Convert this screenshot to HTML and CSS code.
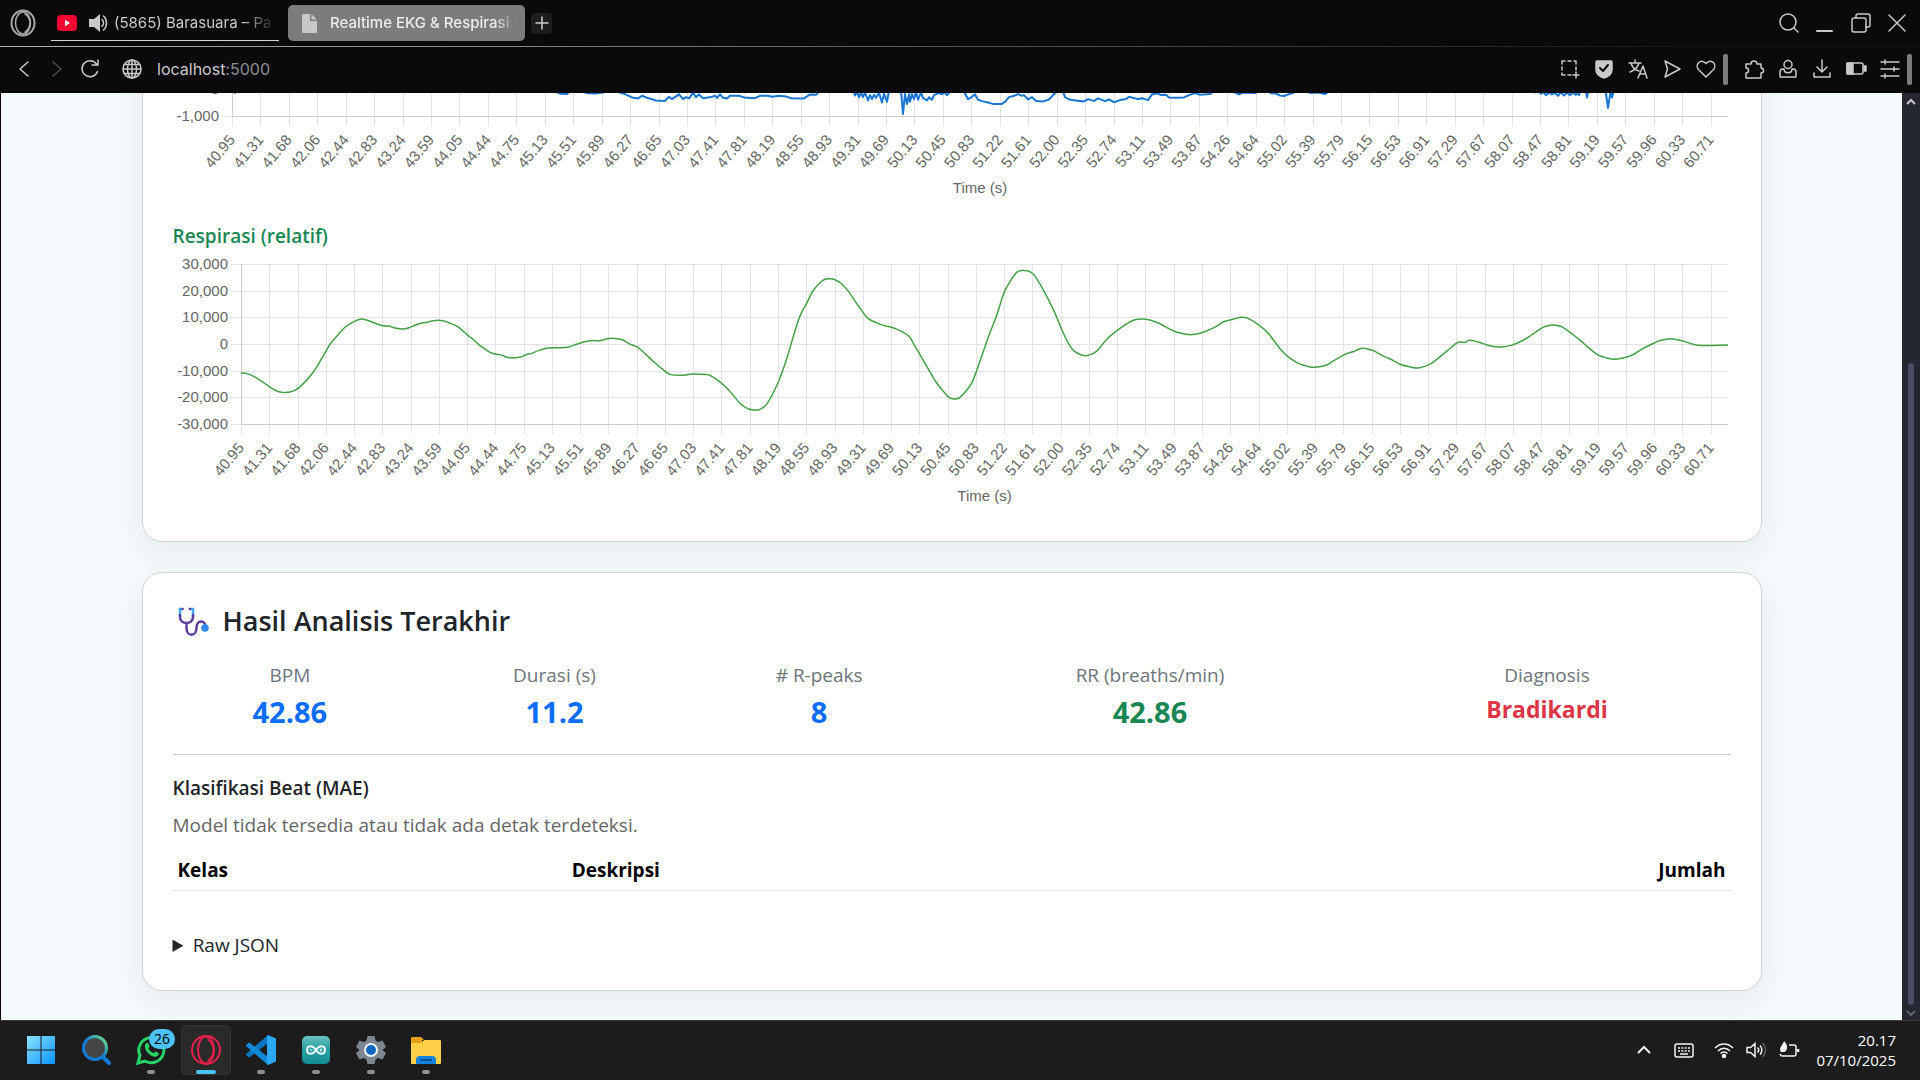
FILE: index.html
```html
<!DOCTYPE html>
<html lang="id">
<head>
<meta charset="utf-8">
<title>Realtime EKG &amp; Respirasi</title>
<link rel="stylesheet" href="styles.css">
</head>
<body>
<header class="browser">
  <div class="tabbar">
    <button class="opera-menu" aria-label="Menu">
      <svg width="26" height="30" viewBox="0 0 26 30" fill="none" stroke="#a9a9a9"><ellipse cx="13" cy="15" rx="11.500" ry="12.500" stroke-width="2"/><ellipse cx="13" cy="15" rx="7.500" ry="11" stroke-width="1.500"/><path d="M15 6c4 3 5 5 5 9s-1 6-5 9" stroke-width="1.500"/></svg>
    </button>
    <button class="tab tab-media">
      <svg width="20" height="16" viewBox="0 0 20 16"><rect width="20" height="16" rx="4" fill="#ff0033"/><path d="M8 4.800v6.400L13 8z" fill="#fff"/></svg>
      <svg class="speaker" width="19" height="18" viewBox="0 0 19 18"><path d="M0 5h5l6-5v18l-6-5H0z" fill="#c9c9c9"/><path d="M13 5.500c2 2 2 5 0 7M14.500 2c4 3.500 4 10.500 0 14" fill="none" stroke="#c9c9c9" stroke-width="1.500"/></svg>
      <span class="tab-title">(5865) Barasuara – Pa</span>
    </button>
    <button class="tab tab-active">
      <svg width="15" height="19" viewBox="0 0 15 19" fill="#c8c8c8"><path d="M1 0h7v7h7v11a1 1 0 0 1-1 1H1a1 1 0 0 1-1-1V1a1 1 0 0 1 1-1zM9.500 0 15 5.500H9.500z"/></svg>
      <span class="tab-title">Realtime EKG &amp; Respirasi V</span>
    </button>
    <button class="tab-new" aria-label="Tab baru"><svg width="12" height="12" viewBox="0 0 12 12" stroke="#ccc" stroke-width="1.500"><path d="M6 0v12M0 6h12"/></svg></button>
    <div class="window-controls">
      <button aria-label="Cari"><svg width="20" height="20" viewBox="0 0 20 20"><circle cx="9" cy="9" r="8"/><path d="m15 15 4 4"/></svg></button>
      <button aria-label="Perkecil"><svg width="20" height="20" viewBox="0 0 20 20"><path d="M2 18h15" stroke-width="2"/></svg></button>
      <button aria-label="Pulihkan"><svg width="20" height="20" viewBox="0 0 20 20"><rect x="1" y="5" width="14" height="14" rx="2"/><path d="M5 5V3a2 2 0 0 1 2-2h10a2 2 0 0 1 2 2v9a2 2 0 0 1-2 2h-2"/></svg></button>
      <button aria-label="Tutup"><svg width="20" height="20" viewBox="0 0 20 20"><path d="m2 2 16 16M18 2 2 18"/></svg></button>
    </div>
  </div>
  <div class="toolbar">
    <button aria-label="Kembali"><svg width="20" height="20" viewBox="0 0 20 20"><path d="m14 3-8 7 8 7"/></svg></button>
    <button class="dim" aria-label="Maju"><svg width="20" height="20" viewBox="0 0 20 20"><path d="m6 3 8 7-8 7"/></svg></button>
    <button aria-label="Muat ulang"><svg width="20" height="20" viewBox="0 0 20 20"><path d="M17.500 12.500a8 8 0 1 1-1-7.500M18 1v5h-6"/></svg></button>
    <div class="address">
      <svg width="20" height="20" viewBox="0 0 20 20"><circle cx="10" cy="10" r="9"/><ellipse cx="10" cy="10" rx="4.500" ry="9"/><path d="M10 1v18M1 10h18M2.500 5.500h15M2.500 14.500h15"/></svg>
      <span class="url">localhost<span class="port">:5000</span></span>
    </div>
    <div class="actions">
      <button aria-label="Tangkap layar"><svg width="20" height="20" viewBox="0 0 20 20"><path d="M2 5V2h3M8 2h3M14 2h2v3M16 8v3M2 8v3M2 14v2h3M8 16h3M13 16h6M16 13v6"/></svg></button>
      <button aria-label="Pemblokir iklan"><svg width="20" height="20" viewBox="0 0 20 20"><path class="solid" d="M3 2h14a1 1 0 0 1 1 1v8c0 4-4 7-8 8-4-1-8-4-8-8V3a1 1 0 0 1 1-1z"/><path d="m6 9 3 3 5-6" class="ink"/></svg></button>
      <button aria-label="Terjemahkan"><svg width="20" height="20" viewBox="0 0 20 20"><path d="M1 4h12M7 1v3M3 4c1 4 4 7 8 8M11 4c-1 4-4 7-9 9M10 19l5-12 4 12M11.500 15h6"/></svg></button>
      <button aria-label="Kirim"><svg width="20" height="20" viewBox="0 0 20 20"><path d="m3 2 15 8-15 8 2.500-8z"/></svg></button>
      <button aria-label="Favorit"><svg width="20" height="20" viewBox="0 0 20 20"><path d="M10 18 2.500 10.500C-1.500 6 4.500-1.500 10 4.500c5.500-6 11.500 1.500 7.500 6z"/></svg></button>
    </div>
    <i class="divider"></i>
    <div class="actions extensions">
      <button aria-label="Ekstensi"><svg width="20" height="20" viewBox="0 0 20 20"><path d="M2 5h5a3 3 0 1 1 6 0h4v4a2.500 2.500 0 0 1 0 5v5H2v-5a2.500 2.500 0 0 0 0-5z"/></svg></button>
      <button aria-label="Profil"><svg width="20" height="20" viewBox="0 0 20 20"><circle cx="10" cy="5.500" r="4"/><path d="M6 10H5a3 3 0 0 0-3 3v5h16v-5a3 3 0 0 0-3-3h-1M6 10c0 5 8 5 8 0"/></svg></button>
      <button aria-label="Unduhan"><svg width="20" height="20" viewBox="0 0 20 20"><path d="M10 1v12M5 8l5 5 5-5M2 14v4h16v-4"/></svg></button>
      <button aria-label="Baterai"><svg width="20" height="20" viewBox="0 0 20 20"><rect x="1" y="4" width="16" height="11" rx="2"/><path class="solid" d="M1 4h6v11H1zM18 7h2v5h-2z"/></svg></button>
      <button aria-label="Pengaturan"><svg width="20" height="20" viewBox="0 0 20 20"><path d="M1 3h18M1 10h18M1 17h18M5 1v4M14 8v4M5 15v4"/></svg></button>
    </div>
    <i class="divider"></i>
  </div>
</header>

<div class="viewport">
  <main class="page">
    <section class="card">
      <div class="chart" id="chart-ekg"></div>
      <h2 class="chart-heading">Respirasi (relatif)</h2>
      <div class="chart" id="chart-resp"></div>
    </section>

    <section class="card">
      <h1 class="card-title">
        <svg width="38" height="36" viewBox="0 0 38 36" fill="none" stroke-width="2.500" stroke-linecap="round"><path d="M9 6H7v7M17 6h3v7" stroke="#3fa9f5"/><path d="M7 12v2c0 8 13 8 13 0v-2M13.500 20v5c0 9 10 9 10 0 0-9 9-8 9-1" stroke="#5d3b9c"/><path d="M9.500 6h.1M17 6h-.1" stroke="#5d3b9c"/><circle cx="32" cy="25" r="2.500" fill="#338af3" stroke="#338af3"/></svg>
        Hasil Analisis Terakhir
      </h1>
      <dl class="stats">
        <div><dt>BPM</dt><dd>42.86</dd></div>
        <div><dt>Durasi (s)</dt><dd>11.2</dd></div>
        <div><dt># R-peaks</dt><dd>8</dd></div>
        <div><dt>RR (breaths/min)</dt><dd class="green">42.86</dd></div>
        <div><dt>Diagnosis</dt><dd class="diagnosis">Bradikardi</dd></div>
      </dl>
      <hr>
      <h2 class="sub-heading">Klasifikasi Beat (MAE)</h2>
      <p class="note">Model tidak tersedia atau tidak ada detak terdeteksi.</p>
      <table class="beats">
        <thead><tr><th class="kelas">Kelas</th><th>Deskripsi</th><th class="num">Jumlah</th></tr></thead>
        <tbody></tbody>
      </table>
      <details><summary>Raw JSON</summary></details>
    </section>
  </main>
  <div class="scrollbar">
    <svg width="10" height="6" viewBox="0 0 10 6"><path d="m1 5 4-4 4 4" fill="none" stroke="#c8c8c8" stroke-width="2"/></svg>
    <i class="thumb"></i>
    <svg width="10" height="6" viewBox="0 0 10 6"><path d="m1 1 4 4 4-4" fill="none" stroke="#60626f" stroke-width="2"/></svg>
  </div>
</div>

<footer class="taskbar">
  <nav class="apps">
    <button aria-label="Mulai"><svg width="30" height="30" viewBox="0 0 30 30"><defs><linearGradient id="win" x2="1" y2="1"><stop stop-color="#8be3ff"/><stop offset="1" stop-color="#0a93ff"/></linearGradient></defs><path fill="url(#win)" d="M1 1h13.500v13.500H1zM15.500 1H29v13.500H15.500zM1 15.500h13.500V29H1zM15.500 15.500H29V29H15.500z"/></svg></button>
    <button aria-label="Cari"><svg width="30" height="30" viewBox="0 0 30 30"><defs><linearGradient id="mag" x1="0" y1="1" x2="1" y2="0"><stop offset=".5" stop-color="#0f7bd6"/><stop offset="1" stop-color="#7dea7a"/></linearGradient></defs><path d="m21 21 7 7" stroke="#0f7bd6" stroke-width="4" stroke-linecap="round"/><circle cx="14" cy="13" r="11.500" fill="#444" stroke="url(#mag)" stroke-width="3"/></svg></button>
    <button class="running" aria-label="WhatsApp"><svg width="30" height="30" viewBox="0 0 30 30"><path d="M2 28 4 20.500A12.500 12.500 0 1 1 9 26z" fill="none" stroke="#25d366" stroke-width="3"/><path d="M9 10c1-3 3-2.500 3.500-1l1 2.500c0 1-1.200 1.500-1 2 1 2.500 3 4 5 4.500 1-.3 1.500-2 2.500-1.500l2.500 1.500c1 1-1 3.500-3 3.800C14 22 8 15 9 10z" fill="#25d366"/></svg><span class="badge">26</span></button>
    <button class="running current" aria-label="Opera GX"><svg width="30" height="30" viewBox="0 0 30 30" fill="none" stroke="#e8204e" stroke-width="2"><circle cx="15" cy="15" r="14"/><ellipse cx="15" cy="15" rx="8" ry="13.500"/><path d="M16.500 4c5 4 6 7 6 11s-1 7-6 11" stroke-width="1.500"/></svg></button>
    <button class="running" aria-label="Visual Studio Code"><svg width="30" height="30" viewBox="0 0 30 30"><path d="M22 0v8L4 22l-1 .5L0 20v-1z" fill="#0a77c2"/><path d="M22 30v-8L4 8l-1-.5L0 10v1z" fill="#1289d6"/><path d="m22 0 8 3.500v23L22 30l-1-1V1z" fill="#2aa8f2"/></svg></button>
    <button class="running" aria-label="Arduino IDE"><svg width="30" height="30" viewBox="0 0 30 30"><defs><linearGradient id="ard" x2="0" y2="1"><stop stop-color="#6fc0c0"/><stop offset=".4" stop-color="#2ba3a5"/><stop offset="1" stop-color="#138d91"/></linearGradient></defs><rect x="1" y="1" width="28" height="28" rx="5" fill="url(#ard)"/><path d="M15 15c-3-5-9-5-9 0s6 5 9 0 9-5 9 0-6 5-9 0z" fill="none" stroke="#e7f4f4" stroke-width="2"/><path d="M8.500 15h3M18.500 15h3M20 13.500v3" stroke="#e7f4f4"/></svg></button>
    <button class="running" aria-label="Pengaturan"><svg width="30" height="30" viewBox="0 0 30 30"><path d="M11.500 1h7l1 4.500L22 7l4.500-1.500L30 12l-3.500 3 3.500 3-3.500 6.500L22 23l-2.500 1.500-1 4.500h-7l-1-4.500L8 23l-4.500 1.500L0 18l3.500-3L0 12l3.500-6.500L8 7l2.500-1.500z" fill="#7d8792"/><circle cx="15" cy="15" r="6" fill="#0a66c0" stroke="#f2f2f2" stroke-width="2"/></svg></button>
    <button class="running" aria-label="File Explorer"><svg width="30" height="30" viewBox="0 0 30 30"><path d="M0 3a1 1 0 0 1 1-1h9l3 3h-2v6H0z" fill="#e5a00d"/><path d="M0 8h10l3-3h16a1 1 0 0 1 1 1v22a1 1 0 0 1-1 1H1a1 1 0 0 1-1-1z" fill="#ffcf48"/><path d="M5 29v-4a4 4 0 0 1 4-4h12a4 4 0 0 1 4 4v4z" fill="#1583dc"/><path d="M9 25h12" stroke="#0a529c" stroke-width="2"/></svg></button>
  </nav>
  <div class="tray">
    <button aria-label="Ikon tersembunyi"><svg width="20" height="20" viewBox="0 0 20 20"><path d="m4 13 6-6 6 6" stroke-width="2"/></svg></button>
    <button aria-label="Papan ketik"><svg width="20" height="20" viewBox="0 0 20 20"><rect x="1" y="4" width="18" height="13" rx="2"/><path d="M4 8h12M4 11h12" stroke-dasharray="2 1.300"/><path d="M6 14h8"/></svg></button>
    <div class="tray-group">
      <svg width="20" height="20" viewBox="0 0 20 20"><path d="M1 8c5-5.500 13-5.500 18 0M4 11c3.500-3.800 8.500-3.800 12 0M6.500 13.500c2-2 5-2 7 0"/><circle cx="10" cy="16" r="1.500" class="solid"/></svg>
      <svg width="20" height="20" viewBox="0 0 20 20"><path d="M1 7.500h3.500L9 3.500v13l-4.500-4H1zM11.500 7.500c1.500 1.500 1.500 3.500 0 5M14 5.500c2.500 2.500 2.500 6.500 0 9"/><path d="M16.500 3c4 4 4 10 0 14" opacity=".3"/></svg>
      <svg width="22" height="20" viewBox="0 0 22 20"><path d="M11 5h5a2 2 0 0 1 2 2v7a2 2 0 0 1-2 2H5a3 3 0 0 1-3-2"/><path d="M20 9v3" stroke-width="2.500"/><path class="leaf" d="M6 1c4 4 4 8 1 11H3C0 8 5 5 6 1z"/></svg>
    </div>
    <time class="clock"><span>20.17</span><span>07/10/2025</span></time>
  </div>
</footer>
<script src="charts.js"></script>
</body>
</html>
```
FILE: styles.css
```css
* { box-sizing: border-box; }
body {
  margin: 0;
  height: 100vh;
  display: flex;
  flex-direction: column;
  overflow: hidden;
  background: #0a0a0a;
  color: #212529;
  font: 19px/30px "Open Sans", "Noto Sans", sans-serif;
}
button { border: 0; padding: 0; margin: 0; background: none; color: inherit; font: inherit; display: flex; align-items: center; justify-content: center; }
h1, h2, p, dl, dd { margin: 0; }
svg { display: block; flex: none; overflow: visible; }

/* Browser chrome */
.browser { font: 15px/20px Inter, sans-serif; color: #c9c9c9; }
.browser svg { stroke-linecap: round; stroke-linejoin: round; }
.tabbar { display: flex; align-items: center; height: 46px; padding-left: 10px; }
.opera-menu { margin-right: 15px; }
.tab { height: 36px; justify-content: flex-start; overflow: hidden; white-space: nowrap; }
.tab-media { width: 228px; padding: 0 2px 0 6px; margin-right: 9px; border-bottom: 1px solid #d4d4d4; }
.speaker { margin: 0 6px 0 12px; }
.tab-title { flex: 1; min-width: 0; overflow: hidden; text-align: left; mask-image: linear-gradient(to right, #000 78%, transparent 100%); }
.tab-active { width: 237px; padding: 0 8px 0 14px; gap: 13px; border-radius: 5px; background: #7c7c7c; color: #ededed; font-weight: 500; }
.tab-active .tab-title { mask-image: linear-gradient(to right, #000 88%, transparent 100%); }
.tab-new { width: 21px; height: 21px; margin-left: 6px; border-radius: 4px; background: #1d1d1d; }
.window-controls { display: flex; gap: 16px; margin-left: auto; padding-right: 13px; }
.window-controls svg, .toolbar svg { fill: none; stroke: #c9c9c9; stroke-width: 1.5; }
.browser .solid { fill: #c9c9c9; }
.browser .ink { stroke: #0a0a0a; stroke-width: 2; }
.toolbar {
  display: flex; align-items: center; gap: 13px; height: 47px; padding: 0 8px 2px 14px;
  border-top: 1px solid; border-image: linear-gradient(to right, #b5b5b5, #555 50%, #141414 88%) 1;
}
.toolbar .dim { opacity: .35; }
.address { display: flex; align-items: center; gap: 15px; flex: 1; margin-left: 9px; }
.url { font-size: 16px; }
.port { color: #8f8f8f; }
.actions { display: flex; gap: 14px; }
.extensions { margin: 0 -6px 0 3px; }
.toolbar .actions + .divider { margin-left: -6px; }
.toolbar .extensions + .divider { margin-left: 0; }
.divider { width: 5px; height: 31px; border-radius: 2px; background: #7b7b7b; }

/* Page */
.viewport { flex: 1; min-height: 0; display: flex; padding-left: 1px; }
.page {
  flex: 1; min-width: 0; display: flex; flex-direction: column; justify-content: flex-end; align-items: center;
  gap: 30px; padding: 0 15px 29px; overflow: hidden; background: #f4f9fc;
}
.card {
  flex: none; width: 100%; max-width: 1620px; padding: 30px;
  border: 1px solid #d0d2d4; border-radius: 20px; background: #fff;
  box-shadow: 0 10px 30px rgba(0, 0, 0, .06);
}
.chart svg { font: 15px "Liberation Sans", Arial, sans-serif; fill: #666; }
.chart .grid { stroke: #e3e3e3; }
.chart .axis { fill: none; stroke: #ccc; }
.chart .line { fill: none; stroke-width: 2; stroke-linejoin: round; }
.chart .line.blue { stroke: #1976d2; }
.chart .line.green { stroke: #43a047; stroke-width: 1.5; }
.chart-heading { margin: 21px 0 10px; font-size: 19px; line-height: 24px; font-weight: 600; color: #198754; }
.card-title { display: flex; align-items: center; gap: 12px; margin-bottom: 21px; font-size: 27px; line-height: 36px; font-weight: 600; }
.stats { display: grid; grid-template-columns: 2fr 2fr 2fr 3fr 3fr; margin: 0 -15px; text-align: center; }
.stats dt { color: #6c757d; }
.stats dd { margin-top: 4px; color: #0d6efd; font-size: 29px; line-height: 36px; font-weight: 700; }
.stats .green { color: #198754; }
.stats .diagnosis { color: #dc3545; font-size: 23px; line-height: 30px; }
hr { margin: 24px 0 21px; border: 0; border-top: 1px solid #c8c9ca; }
.sub-heading { margin-bottom: 10px; font-size: 19px; line-height: 24px; font-weight: 600; }
.note { margin-bottom: 10px; color: #666; }
.beats { width: 100%; border-collapse: collapse; color: #000; }
.beats th { padding: 5px; border-bottom: 1px solid #dee2e6; text-align: left; font-weight: 700; }
.beats .kelas { width: 25.3%; }
.beats .num { text-align: right; }
details { margin-top: 39px; }
summary { width: max-content; }

.scrollbar { width: 18px; display: flex; flex-direction: column; align-items: center; padding: 6px 0 4px; background: #242632; }
.thumb { flex: none; width: 6px; height: 70%; margin: auto 0 5px; border-radius: 3px; background: #4a4c66; }

/* Taskbar */
.taskbar { display: flex; justify-content: space-between; height: 60px; padding: 0 24px 1px 16px; border-top: 1px solid #3c3c3c; background: #1c1c1c; color: #fff; }
.apps { display: flex; align-items: center; gap: 5px; }
.apps button { position: relative; width: 50px; height: 50px; border-radius: 5px; }
.running::after { content: ""; position: absolute; bottom: 1px; left: 50%; width: 8px; height: 4px; margin-left: -4px; border-radius: 2px; background: #8f8f8f; }
.apps .current { background: #2a2a2a; border: 1px solid #343434; }
.current::after { width: 20px; margin-left: -10px; bottom: 0; background: #4cc2ff; }
.badge { position: absolute; top: 4px; right: 1px; width: 26px; height: 20px; border-radius: 10px; background: #4cc2ff; color: #000; font-size: 14px; line-height: 20px; text-align: center; }
.tray { display: flex; align-items: center; gap: 20px; }
.tray svg { fill: none; stroke: #f2f2f2; stroke-width: 1.5; }
.tray .solid { fill: #f2f2f2; }
.tray .leaf { fill: #f2f2f2; stroke: none; }
.tray-group { display: flex; gap: 12px; margin-right: -4px; }
.clock { display: flex; flex-direction: column; text-align: right; font-size: 15px; line-height: 20px; }
```
FILE: charts.js
```js
const labels = ("40.95 41.31 41.68 42.06 42.44 42.83 43.24 43.59 44.05 44.44 44.75 45.13 45.51 45.89 46.27 46.65 47.03 47.41 47.81 48.19 " +
  "48.55 48.93 49.31 49.69 50.13 50.45 50.83 51.22 51.61 52.00 52.35 52.74 53.11 53.49 53.87 54.26 54.64 55.02 55.39 55.79 " +
  "56.15 56.53 56.91 57.29 57.67 58.07 58.47 58.81 59.19 59.57 59.96 60.33 60.71").split(" ");

// Samples are "position,value" pairs.
const ekg = `0,100 3,-140 5,50 150,300 320,50 324,-100 328,-175 335,-190 338,-90 345,-40 350,-100 356,-160 364,-165 371,-130 375,-80
385,-100 393,-190 400,-310 406,-350 410,-250 415,-325 424,-425 433,-440 437,-290 440,-375 447,-200 451,-375 454,-300 457,-350 461,-140
464,-300 467,-200 471,-340 479,-300 483,-250 485,-325 488,-200 491,-325 495,-350 498,-250 507,-250 512,-310 523,-340 528,-250 536,-250
540,-290 547,-250 554,-275 559,-340 572,-350 578,-200 584,-210 587,-100 590,100 612,200 620,0 622,-110 623,-240 625,-100 627,-310 629,-140
631,-300 633,-125 636,-425 638,-225 640,-375 642,-210 644,-325 647,-140 650,-500 652,-175 655,-475 657,-60 660,200 666,100 669,-60
671,-925 673,-190 675,-560 677,-190 678,-475 680,-190 682,-375 684,-100 686,-400 689,-125 691,-325 695,-425 697,-310 700,-400 702,-225
707,-150 710,-200 712,-110 715,-225 718,-110 721,100 729,100 732,-100 736,-375 740,-290 743,-200 746,-400 750,-450 756,-500 761,-550
770,-550 773,-475 777,-300 782,-250 786,-190 790,-250 792,-225 796,-390 800,-300 804,-440 811,-460 817,-390 823,-150 827,-60 831,-100
833,-300 838,-400 852,-460 856,-375 859,-410 862,-440 866,-350 873,-450 877,-390 882,-490 888,-410 894,-375 897,-290 906,-375 910,-340
916,-410 920,-200 925,-160 929,-225 934,-210 937,-310 945,-325 952,-310 957,-225 963,-150 968,-210 978,-190 981,-100 995,-100 1002,-110
1007,-200 1011,-125 1023,-150 1026,-80 1036,-80 1039,-160 1044,-170 1048,-240 1052,-260 1057,-190 1061,-150 1063,-80 1076,-80 1078,-150
1086,-130 1093,-190 1097,-90 1100,100 1200,300 1300,0 1303,-125 1306,-60 1309,-180 1311,-100 1314,-230 1317,-130 1320,-200 1323,-140
1326,-250 1329,-120 1332,-240 1335,-140 1338,-230 1341,-120 1344,-220 1346,-100 1347,-230 1349,100 1353,100 1355,-320 1357,100 1373,100
1376,-700 1379,0 1380,-310 1383,100 1496,200`;
const resp = `0,-10750 7,-11200 15,-12600 28,-15900 35,-17500 41,-18100 49,-18000 56,-16900 64,-14200 72,-10700 78,-7200 85,-2700 89,-100
96,3000 104,6300 113,8400 120,9400 127,8800 134,7800 141,6900 148,6700 153,6100 162,5600 168,6100 174,7000 181,7900 186,8100 192,8750
202,8750 209,7800 217,6400 226,3500 232,1750 239,-600 243,-1600 249,-3100 256,-3900 260,-4100 266,-5000 272,-5250 280,-4900 285,-4000
290,-3600 298,-2400 308,-1500 319,-1400 328,-1100 333,-400 341,600 349,1250 360,1300 366,2000 374,2100 382,1500 388,100 396,-1100
402,-2900 413,-6750 423,-9900 429,-11400 441,-11750 451,-11250 464,-11400 468,-11600 476,-13400 486,-16600 500,-22600 507,-24250
513,-24750 519,-24500 526,-22400 537,-14500 545,-6400 552,2400 559,10500 566,15500 572,19900 579,23000 584,24250 589,24500 594,24100
600,22750 607,19900 618,14000 627,9600 636,7900 643,6900 652,6100 661,4600 668,2900 673,-100 684,-7250 695,-14250 704,-18500 708,-20000
713,-20600 718,-20250 723,-18500 731,-14500 739,-6400 748,3250 756,11100 763,19250 770,24000 775,26600 779,27400 783,27600 788,27250
793,25900 802,20500 813,12400 820,6100 827,500 832,-2250 838,-3750 844,-4400 850,-3900 856,-2600 866,1900 876,5000 886,7600 893,9000
901,9400 909,9000 918,7750 932,5000 941,3900 949,3500 959,4000 973,6100 982,8250 989,9000 1000,10000 1007,9600 1018,7100 1027,4100
1039,-1750 1047,-4750 1056,-7000 1063,-8000 1069,-8600 1074,-8750 1085,-8000 1092,-6400 1103,-4100 1108,-3250 1112,-2900 1121,-1600
1130,-2250 1134,-2750 1140,-4100 1147,-5250 1152,-6100 1159,-7600 1169,-8600 1177,-9000 1187,-7900 1193,-6600 1204,-3250 1216,400
1220,750 1224,600 1228,1400 1237,750 1250,-750 1261,-1100 1271,-400 1277,500 1286,2250 1302,6250 1309,7000 1315,7000 1322,6250
1338,1750 1347,-1250 1357,-4100 1366,-5250 1373,-5750 1382,-5250 1392,-4000 1401,-1900 1414,500 1420,1400 1430,2000 1439,1400
1454,-250 1465,-600 1487,-400`;

// Fraction of the plot width at which the last label stands.
const LAST_TICK = 0.9884;

function linePath(points, smooth) {
  if (!smooth) return "M" + points.map(p => p.map(n => n.toFixed(1)).join(" ")).join("L");
  let d = `M${points[0].join(" ")}`;
  for (let i = 0; i < points.length - 1; i++) {
    const a = points[i - 1] || points[i], b = points[i], c = points[i + 1], e = points[i + 2] || c;
    const t = (c[0] - b[0]) / 3;
    const s1 = (c[1] - a[1]) / (c[0] - a[0]), s2 = (e[1] - b[1]) / (e[0] - b[0]);
    d += `C${[b[0] + t, b[1] + t * s1, c[0] - t, c[1] - t * s2, c[0], c[1]].map(n => n.toFixed(1)).join(" ")}`;
  }
  return d;
}

function drawChart(id, { data, color, smooth, axisWidth, max, min, step, plotHeight }) {
  const host = document.getElementById(id);
  const width = host.clientWidth;
  const top = 6, left = axisWidth, right = width - 3, bottom = top + plotHeight;
  const snap = v => Math.round(v) + 0.5;
  const y = v => top + (max - v) / (max - min) * plotHeight;
  let out = "", text = "";

  for (let v = max; v >= min; v -= step) {
    out += `<path class="grid" d="M${left - 10} ${snap(y(v))}H${right}"/>`;
    text += `<text x="${left - 13}" y="${y(v) + 5}" text-anchor="end">${v.toLocaleString("en-US")}</text>`;
  }
  labels.forEach((label, i) => {
    const x = left + (right - left) * LAST_TICK * i / (labels.length - 1);
    out += `<path class="grid" d="M${snap(x)} ${top}V${bottom + 10}"/>`;
    text += `<text transform="translate(${x} ${bottom + 21}) rotate(-50)" dy="5" text-anchor="end">${label}</text>`;
  });
  out += `<path class="axis" d="M${snap(left)} ${top}V${snap(bottom)}H${right}"/>`;

  const samples = data.trim().split(/\s+/).map(p => p.split(",").map(Number));
  const span = samples[samples.length - 1][0];
  const points = samples.map(([t, v]) => [left + t / span * (right - left), y(v)]);
  out += `<path class="line ${color}" d="${linePath(points, smooth)}"/>`;
  text += `<text x="${(left + right) / 2}" y="${bottom + 77}" text-anchor="middle">Time (s)</text>`;

  host.innerHTML = `<svg width="${width}" height="${bottom + 87}">${out}${text}</svg>`;
}

function drawAll() {
  drawChart("chart-ekg", { data: ekg, color: "blue", smooth: false, axisWidth: 59, max: 0, min: -1000, step: 1000, plotHeight: 27 });
  drawChart("chart-resp", { data: resp, color: "green", smooth: true, axisWidth: 68, max: 30000, min: -30000, step: 10000, plotHeight: 160 });
}
drawAll();
window.addEventListener("resize", drawAll);
```
